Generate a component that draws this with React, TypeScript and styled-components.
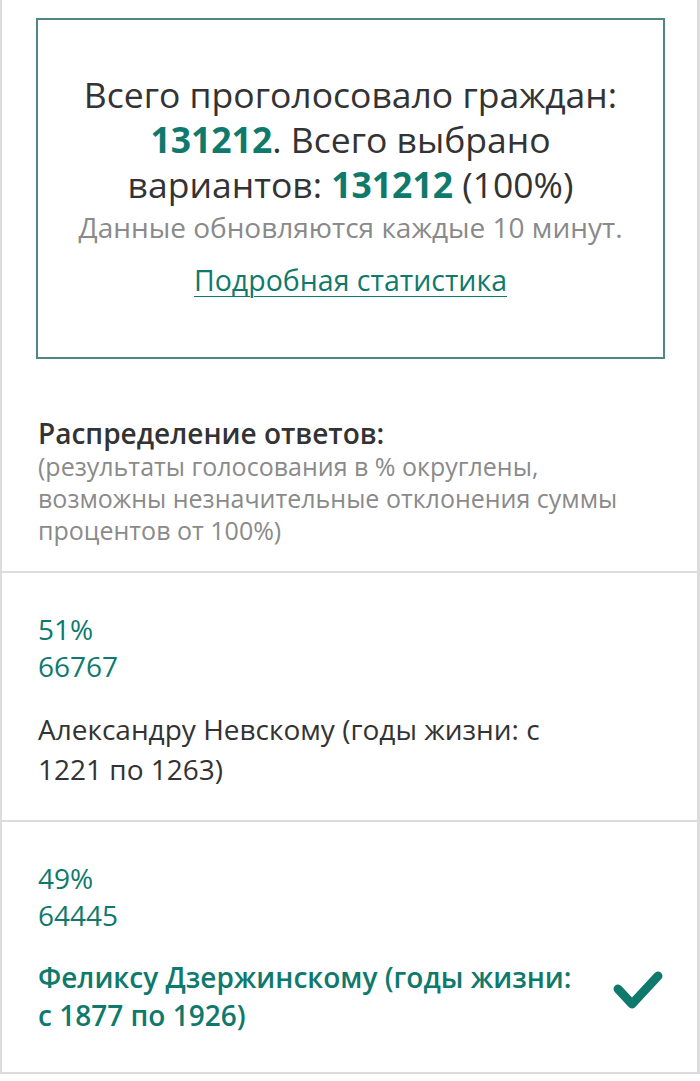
import React from 'react';
import styled, { createGlobalStyle } from 'styled-components';

const teal = '#0f7a6c';

const GlobalStyle = createGlobalStyle`
    body {
        margin: 0;
        background: white;
        font-family: "Open Sans", "Noto Sans", sans-serif;
    }
`;

const answers = [
    { percent: '51%', votes: '66767', name: 'Александру Невскому (годы жизни: с 1221 по 1263)', chosen: false },
    { percent: '49%', votes: '64445', name: 'Феликсу Дзержинскому (годы жизни: с 1877 по 1926)', chosen: true },
];

const CheckIcon = () => (
    <svg width="54" height="44" viewBox="0 0 54 44">
        <path d="M7 22 L21 37 L47 9" fill="none" stroke={teal} strokeWidth="9" strokeLinecap="round" strokeLinejoin="round" />
    </svg>
);

const App = () => {
    return (
        <>
            <GlobalStyle />
            <CardWrapper>
                <TotalsBox>
                    <TotalsText>
                        Всего проголосовало граждан: <Num>131212</Num>. Всего выбрано вариантов: <Num>131212</Num> (100%)
                    </TotalsText>
                    <UpdateNote>Данные обновляются каждые 10 минут.</UpdateNote>
                    <StatsLink href="#">Подробная статистика</StatsLink>
                </TotalsBox>

                <Distribution>
                    <DistTitle>Распределение ответов:</DistTitle>
                    <DistNote>
                        (результаты голосования в % округлены, возможны незначительные отклонения суммы процентов от 100%)
                    </DistNote>
                </Distribution>

                {answers.map((a) => (
                    <AnswerRow key={a.votes}>
                        <Figure>{a.percent}</Figure>
                        <Figure>{a.votes}</Figure>
                        <AnswerLine>
                            <AnswerName chosen={a.chosen}>{a.name}</AnswerName>
                            {a.chosen && <CheckIcon />}
                        </AnswerLine>
                    </AnswerRow>
                ))}
            </CardWrapper>
        </>
    )
}

export default App

const CardWrapper = styled.div`
    width: 700px;
    box-sizing: border-box;
    border-left: 2px solid #dcdcdc;
    border-right: 3px solid #dcdcdc;
    border-bottom: 2px solid #dcdcdc;
    padding-top: 18px;
    margin-bottom: 8px;
`;

const TotalsBox = styled.div`
    margin: 0 32px 0 34px;
    height: 341px;
    box-sizing: border-box;
    border: 2px solid #4f8883;
    padding: 52px 24px 0;
    text-align: center;
    display: flex;
    flex-direction: column;
    align-items: center;
`;

const TotalsText = styled.div`
    font-size: 35.5px;
    line-height: 45px;
    color: #333;
    padding: 0 6px;
`;

const Num = styled.span`
    display: inline-block;
    line-height: 45px;
    color: ${teal};
    font-weight: 700;
`;

const UpdateNote = styled.div`
    font-size: 28px;
    line-height: 40px;
    color: #8a8a8a;
    margin-top: 0;
    white-space: nowrap;
`;

const StatsLink = styled.a`
    margin-top: 16px;
    font-size: 28.5px;
    line-height: 34px;
    color: ${teal};
    text-decoration: underline;
    text-underline-offset: 5px;
    text-decoration-thickness: 1px;
`;

const Distribution = styled.div`
    padding: 57px 36px 25px;
    border-bottom: 2px solid #dcdcdc;
`;

const DistTitle = styled.div`
    font-size: 28px;
    font-weight: 600;
    line-height: 34px;
    color: #333;
`;

const DistNote = styled.div`
    font-size: 25px;
    line-height: 32px;
    color: #8a8a8a;
    max-width: 590px;
`;

const AnswerRow = styled.div`
    padding: 38px 36px 31px;
    border-bottom: 2px solid #dcdcdc;
    &:last-child {
        border-bottom: none;
        padding-bottom: 38px;
    }
`;

const Figure = styled.div`
    font-size: 28px;
    line-height: 37px;
    color: ${teal};
`;

const AnswerLine = styled.div`
    display: flex;
    align-items: center;
    justify-content: space-between;
    margin-top: 24px;
    gap: 20px;
    > svg {
        margin-right: -4px;
        margin-bottom: 14px;
        flex-shrink: 0;
    }
`;

const AnswerName = styled.div<{ chosen: boolean }>`
    font-size: 28px;
    line-height: ${(p) => (p.chosen ? 38 : 40)}px;
    max-width: 548px;
    color: ${(p) => (p.chosen ? teal : '#333')};
    font-weight: ${(p) => (p.chosen ? 600 : 400)};
`;
